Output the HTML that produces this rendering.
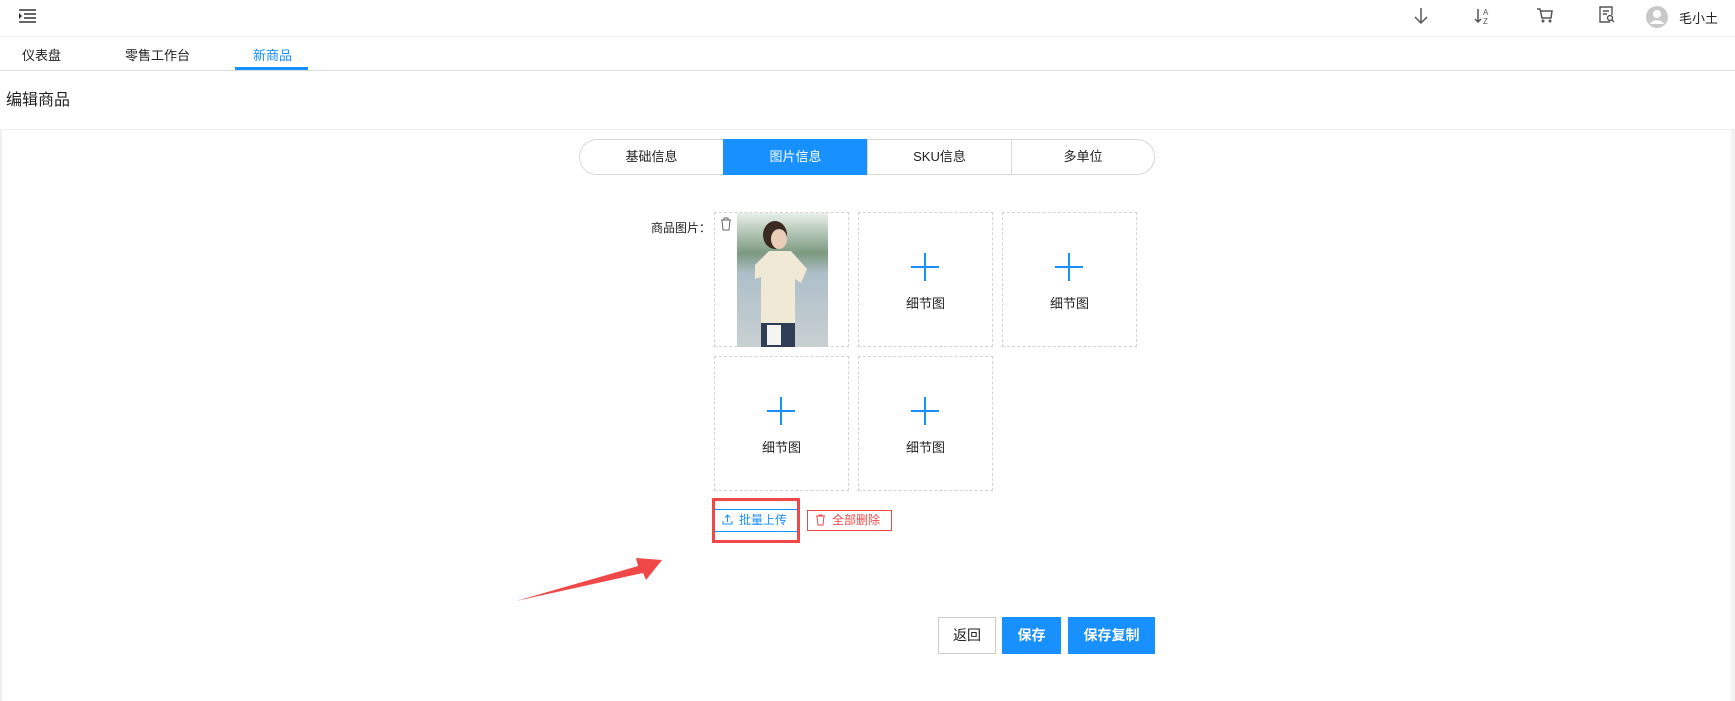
<!DOCTYPE html>
<html><head><meta charset="utf-8"><style>
*{margin:0;padding:0;box-sizing:border-box}
body{width:1735px;height:701px;background:#fff;font-family:"Liberation Sans","Noto Sans CJK SC",sans-serif;color:#222;position:relative;overflow:hidden}
.a{position:absolute}
.t{font-size:14px;white-space:nowrap}
.box{position:absolute;width:135px;height:135px;border:1px dashed #d4d4d4;text-align:center}
.box .p{position:absolute;left:52px;top:40px;width:28px;height:28px}
.box .p:before{content:"";position:absolute;left:0;top:13px;width:28px;height:2px;background:#1890ff}
.box .p:after{content:"";position:absolute;left:13px;top:0;width:2px;height:28px;background:#1890ff}
.box span{position:absolute;left:0;right:0;top:80px;font-size:13px;color:#222}
.seg{position:absolute;top:139px;height:36px;width:145px;border:1px solid #d9d9d9;font-size:13px;text-align:center;line-height:34px;color:#222}
.btn{position:absolute;top:617px;height:37px;line-height:37px;text-align:center;font-size:14px;color:#fff;background:#1890ff;font-weight:bold}
</style></head><body>
<div class="a" style="left:0;top:36px;width:1735px;height:1px;background:#eee"></div>
<svg class="a" style="left:19px;top:9px" width="18" height="14"><path d="M0 1h17M5 5h12M5 9h12M0 13h17" stroke="#333" stroke-width="1.5"/><path d="M0 4l3 3-3 3z" fill="#333"/></svg>
<svg class="a" style="left:1412px;top:6px" width="18" height="20"><path d="M9 2v15M3 11l6 6 6-6" stroke="#555" stroke-width="1.5" fill="none"/></svg>
<svg class="a" style="left:1474px;top:6px" width="18" height="20"><path d="M4 3v13M1 13l3 3 3-3" stroke="#555" stroke-width="1.5" fill="none"/><text x="9" y="9" font-size="8" fill="#555" font-family="Liberation Sans">A</text><text x="9" y="18" font-size="8" fill="#555" font-family="Liberation Sans">Z</text></svg>
<svg class="a" style="left:1536px;top:6px" width="18" height="20"><path d="M1 3h3l2 9h9l1-7H5" stroke="#555" stroke-width="1.5" fill="none"/><circle cx="7" cy="15" r="1.5" fill="#555"/><circle cx="14" cy="15" r="1.5" fill="#555"/></svg>
<svg class="a" style="left:1598px;top:5px" width="18" height="20"><path d="M12 17H2V2h12v8M5 6h6M5 9h4" stroke="#555" stroke-width="1.4" fill="none"/><circle cx="12" cy="13" r="2.5" stroke="#555" stroke-width="1.4" fill="none"/><path d="M14 15l2 2" stroke="#555" stroke-width="1.4"/></svg>
<svg class="a" style="left:1645px;top:5px" width="24" height="24"><circle cx="12" cy="12" r="11" fill="#c8c8c8"/><circle cx="12" cy="9" r="4" fill="#fff"/><path d="M5 19c2-5 12-5 14 0" fill="#fff"/></svg>
<div class="a t" style="left:1679px;top:8px;font-size:13px">毛小土</div>
<div class="a t" style="left:22px;top:45px;font-size:13px">仪表盘</div>
<div class="a t" style="left:125px;top:45px;font-size:13px">零售工作台</div>
<div class="a t" style="left:253px;top:45px;font-size:13px;color:#1890ff">新商品</div>
<div class="a" style="left:235px;top:67px;width:73px;height:3px;background:#1890ff"></div>
<div class="a" style="left:0;top:70px;width:1735px;height:1px;background:#ddd"></div>
<div class="a t" style="left:6px;top:86px;font-size:16px">编辑商品</div>
<div class="a" style="left:0;top:129px;width:1735px;height:1px;background:#eee"></div>
<div class="a" style="left:0;top:130px;width:2px;height:571px;background:#f0f0f0"></div>
<div class="a" style="left:1731px;top:130px;width:4px;height:571px;background:#f3f3f3"></div>
<div class="seg" style="left:579px;border-radius:18px 0 0 18px">基础信息</div>
<div class="seg" style="left:723px;background:#1890ff;border-color:#1890ff;color:#fff">图片信息</div>
<div class="seg" style="left:867px">SKU信息</div>
<div class="seg" style="left:1011px;border-radius:0 18px 18px 0;width:144px">多单位</div>
<div class="a t" style="left:651px;top:219px;font-size:12px">商品图片：</div>
<div class="box" style="left:714px;top:212px">
<svg class="a" style="left:5px;top:4px" width="12" height="14"><path d="M1 3h10M4 3V1h4v2M2 3l1 10h6l1-10" stroke="#666" fill="none"/></svg>
<svg class="a" style="left:22px;top:0" width="91" height="134"><defs><linearGradient id="g" x1="0" y1="0" x2="0" y2="1"><stop offset="0" stop-color="#e8efe9"/><stop offset=".3" stop-color="#7c9a80"/><stop offset=".45" stop-color="#aebfc9"/><stop offset="1" stop-color="#c9d0d2"/></linearGradient></defs><rect width="91" height="134" fill="url(#g)"/><ellipse cx="38" cy="22" rx="12" ry="14" fill="#3a2a22"/><ellipse cx="42" cy="26" rx="8" ry="10" fill="#e9cdb8"/><path d="M18 52l14-14h22l16 18-6 14-6-4v45H24V64l-6 2z" fill="#efe9d6"/><rect x="24" y="110" width="34" height="24" fill="#2f3d55"/><rect x="30" y="112" width="14" height="20" fill="#f4f4f0"/></svg>
</div>
<div class="box" style="left:858px;top:212px"><div class="p"></div><span>细节图</span></div>
<div class="box" style="left:1002px;top:212px"><div class="p"></div><span>细节图</span></div>
<div class="box" style="left:714px;top:356px"><div class="p"></div><span>细节图</span></div>
<div class="box" style="left:858px;top:356px"><div class="p"></div><span>细节图</span></div>
<div class="a" style="left:712px;top:498px;width:88px;height:45px;border:3px solid #f04848"></div>
<div class="a" style="left:715px;top:509px;width:82px;height:23px;border-top:1px solid #1890ff;border-bottom:1px solid #1890ff;color:#1890ff;font-size:12px;line-height:21px;padding-left:7px"><svg width="11" height="11" style="vertical-align:-1px;margin-right:6px"><path d="M1 7v3h9V7M5.5 8V1M3 3.5l2.5-2.5 2.5 2.5" stroke="#1890ff" fill="none"/></svg>批量上传</div>
<div class="a" style="left:807px;top:510px;width:85px;height:21px;border:1px solid #f04848;color:#f04848;font-size:12px;line-height:19px;padding-left:7px"><svg width="11" height="12" style="vertical-align:-2px;margin-right:6px"><path d="M1 2h9M4 2V1h3v1M2 2l1 9h5l1-9" stroke="#f04848" fill="none"/></svg>全部删除</div>
<svg class="a" style="left:510px;top:550px" width="160" height="60"><path d="M6 51L128 16l-2-8 26 2-16 20-3-7z" fill="#f04848"/></svg>
<div class="a" style="left:938px;top:617px;width:58px;height:37px;border:1px solid #ccc;text-align:center;line-height:35px;font-size:14px">返回</div>
<div class="btn" style="left:1002px;width:59px">保存</div>
<div class="btn" style="left:1068px;width:87px">保存复制</div>
</body></html>
